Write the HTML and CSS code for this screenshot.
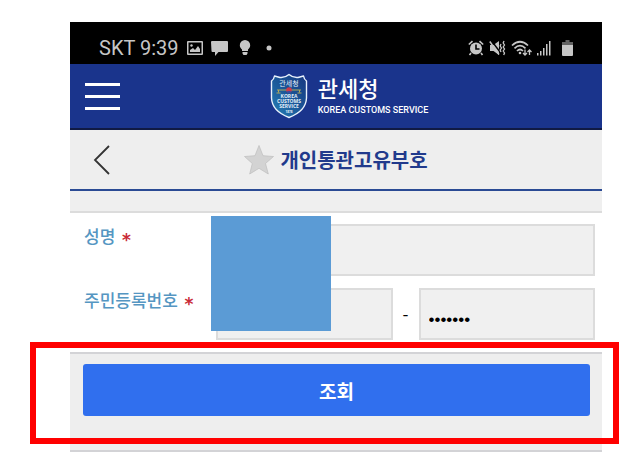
FILE: index.html
```
<!DOCTYPE html>
<html lang="ko">
<head>
    <meta charset="utf-8">
    <meta name="viewport" content="width=device-width, initial-scale=1">
    <title>개인통관고유부호</title>
    <link rel="stylesheet" href="styles.css">
</head>

<body>
    <div class="phone">
        <div class="status-bar">
            <span class="carrier">SKT 9:39</span>
            <svg class="status-icon" width="16" height="16" viewBox="0 0 16 16">
                <path fill="#c6c6c6" fill-rule="evenodd" d="M1 1h14q1 0 1 1v12q0 1-1 1H1q-1 0-1-1V2q0-1 1-1zM1.500 2.500v11h13v-11z"/>
                <path fill="#c6c6c6" d="M3 12V10l3-2 2 2 3-4 2 3v3z"/>
                <circle cx="4.500" cy="5.500" r="1.200" fill="#c6c6c6"/>
            </svg>
            <svg class="status-icon" width="17" height="16" viewBox="0 0 17 16">
                <path fill="#c6c6c6" d="M1 1h15q1 0 1 1v9q0 1-1 1H7.500L4 16v-4H1.500q-1 0-1-1L0 2q0-1 1-1z"/>
            </svg>
            <svg class="status-icon bulb" width="12" height="16" viewBox="0 0 12 16">
                <path fill="#c6c6c6" d="M6 0a5.200 5.200 0 0 1 5.200 5.200c0 2-1.200 3.300-2.200 4.300v1.500H3V9.500C2 8.500.8 7.200.8 5.200A5.200 5.200 0 0 1 6 0zM3.500 12h5v1.500L7.500 15h-3l-1-1.500z"/>
            </svg>
            <svg class="status-icon dot" width="6" height="6" viewBox="0 0 6 6">
                <circle cx="3" cy="3" r="2.500" fill="#c6c6c6"/>
            </svg>

            <div class="status-right">
                <svg width="16" height="16" viewBox="0 0 16 16">
                    <path fill="none" stroke="#c6c6c6" stroke-width="1.600" d="M.8 4.500 4.500 1.200M15.200 4.500 11.500 1.200M3 13l-1.500 2M13 13l1.500 2"/>
                    <circle cx="8" cy="8.500" r="6" fill="#c6c6c6"/>
                    <path fill="none" stroke="#000" stroke-width="1.600" d="M8 4.500V9h3.500"/>
                </svg>
                <svg width="17" height="16" viewBox="0 0 17 16">
                    <path fill="#c6c6c6" d="M1 5h3.500L10 1v14l-5.500-4H1z"/>
                    <path stroke="#000" stroke-width="1.400" d="M2 0l9 12"/>
                    <path stroke="#c6c6c6" stroke-width="1.500" d="M.8 1.500 10 14.500"/>
                    <path fill="none" stroke="#c6c6c6" stroke-width="1.300" d="m12 4-.8 2 1.300 2-1.300 2 .8 2M15 1l-.8 2 1.300 2-1.300 2 1.300 2-1.300 2 1.300 2-.8 2"/>
                </svg>
                <svg width="21" height="16" viewBox="0 0 21 16">
                    <path fill="none" stroke="#c6c6c6" stroke-width="1.700" d="M1 5.500Q9 -2 17 5.500M3.500 8.300Q9 3 14.500 8.300M6 11Q9 8 12 11"/>
                    <circle cx="9" cy="13" r="1.300" fill="#c6c6c6"/>
                    <path fill="none" stroke="#c6c6c6" stroke-width="1.300" d="M14 9.500V15m-2-2 2 2 2-2M18.500 15V10m-2 2 2-2 2 2"/>
                </svg>
                <svg width="14" height="16" viewBox="0 0 14 16">
                    <path fill="#c6c6c6" d="M0 13h1.500v2.500H0zM3 11h1.500v4.500H3zM6 8h1.500v7.500H6zM9 4h1.500v11.500H9zM12 1h1.500v14.500H12z"/>
                </svg>
                <svg class="battery" width="11" height="16" viewBox="0 0 11 16">
                    <path fill="#626262" d="M3.500 0h4v2H11v4H0V2h3.500z"/>
                    <path fill="#c6c6c6" d="M0 5h11v10q0 1-1 1H1q-1 0-1-1z"/>
                </svg>
            </div>
        </div>

        <header class="site-header">
            <button class="menu-button" type="button" aria-label="메뉴">
                <span></span>
                <span></span>
                <span></span>
            </button>
            <a class="logo" href="#">
                <svg width="38" height="46" viewBox="0 0 38 46">
                    <defs>
                        <linearGradient id="shield" x1="0" y1="1" x2="1" y2="0">
                            <stop offset="0" stop-color="#2682b8"/>
                            <stop offset=".5" stop-color="#1b5798"/>
                            <stop offset="1" stop-color="#173780"/>
                        </linearGradient>
                    </defs>
                    <path fill="url(#shield)" stroke="#e8f1fc" stroke-width="1.400" stroke-linejoin="round" d="M19 1.500Q23 5 28 4.500L33.500 3Q34 6 36.500 8V25Q36 38 19 44.500 2 38 1.500 25V8Q4 6 4.500 3L10 4.500Q15 5 19 1.500z"/>
                    <g class="shield-text">
                        <text class="shield-ko" x="19" y="13">관세청</text>
                        <text x="19" y="25">KOREA</text>
                        <text x="19" y="30">CUSTOMS</text>
                        <text x="19" y="35">SERVICE</text>
                        <text class="shield-year" x="19" y="40">1878</text>
                    </g>
                    <path fill="none" stroke="#b0a85c" d="M7 17h24M8.500 17v2.500M29.500 17v2.500M6.500 20h4M27.500 20h4"/>
                    <circle cx="19" cy="17" r="2.800" fill="#cd3b4b"/>
                    <path fill="#354ba5" d="M16.500 18.500Q19 17.500 21.500 18.500A2.800 2.800 0 0 1 16.500 18.500z"/>
                </svg>
                <span class="logo-text">
                    <span class="logo-ko">관세청</span>
                    <span class="logo-en">KOREA CUSTOMS SERVICE</span>
                </span>
            </a>
        </header>

        <div class="title-bar">
            <button class="back-button" type="button" aria-label="뒤로">
                <svg width="18" height="30" viewBox="0 0 18 30">
                    <path fill="none" stroke="#333" stroke-width="1.800" d="M16 1 2 15l14 14"/>
                </svg>
            </button>
            <h1 class="title">
                <svg width="30" height="30" viewBox="0 0 30 30">
                    <path fill="#d3d3d3" stroke="#bdbdbd" stroke-width=".7" d="M15 .5l4 10.200 10.500.8-8 7 2.800 10.500L15 23.300 5.700 29l2.600-10.500-7.800-7 10.500-.8z"/>
                </svg>
                개인통관고유부호
            </h1>
        </div>

        <div class="spacer"></div>

        <form>
            <div class="fields">
                <label for="userName">성명 <span class="required">*</span></label>
                <div class="field">
                    <input type="text" id="userName">
                </div>

                <label for="idFront">주민등록번호 <span class="required">*</span></label>
                <div class="field">
                    <input type="text" id="idFront">
                    <span class="dash">-</span>
                    <input type="password" id="idBack" value="0000000" aria-label="주민등록번호 뒷자리">
                </div>
                <div class="mask"></div>
            </div>

            <div class="actions">
                <button class="search-button" type="button">조회</button>
                <div class="highlight"></div>
            </div>
        </form>
    </div>
</body>
</html>
```
FILE: styles.css
```
* {
    box-sizing: border-box;
}
body {
    margin: 0;
    background-color: #fff;
    font-family: "Noto Sans CJK KR", sans-serif;
    font-size: 17px;
}
button {
    font-family: inherit;
    border: none;
    cursor: pointer;
}
svg {
    display: block;
    flex: none;
}
.phone {
    margin: 22px 35px 0 70px;
}

/* status bar */
.status-bar {
    display: flex;
    align-items: center;
    height: 42px;
    padding: 9px 29px 0 29px;
    background-color: #000;
    color: #c6c6c6;
}
.carrier {
    font-family: Roboto, sans-serif;
    font-size: 20px;
}
.status-icon {
    margin-left: 8px;
}
.bulb {
    margin-left: 11px;
}
.dot {
    margin-left: 15px;
}
.status-right {
    display: flex;
    gap: 5px;
    margin-left: auto;
}
.battery {
    margin-left: 6px;
}

/* header */
.site-header {
    display: grid;
    grid-template-columns: 62px 1fr 36px;
    align-items: center;
    height: 66px;
    background-color: #1a348c;
    border-bottom: 2px solid #101a44;
}
.menu-button {
    display: flex;
    flex-direction: column;
    gap: 9px;
    width: 35px;
    margin-left: 15px;
    padding: 0;
    background: none;
}
.menu-button span {
    height: 3px;
    background-color: #fff;
}
.logo {
    display: flex;
    justify-content: center;
    gap: 10px;
    color: #fff;
    text-decoration: none;
}
.logo-text {
    display: flex;
    flex-direction: column;
}
.logo-ko {
    font-size: 22px;
    font-weight: 500;
    line-height: 28px;
}
.logo-en {
    font-family: Roboto, sans-serif;
    font-size: 9px;
    font-weight: 500;
    line-height: 18px;
}
.shield-text {
    fill: #e4effa;
    font-family: "Open Sans", sans-serif;
    font-size: 5px;
    font-weight: 700;
    text-anchor: middle;
}
.shield-ko {
    font-family: "Noto Sans CJK KR", sans-serif;
    font-size: 7px;
    font-weight: 400;
}
.shield-year {
    font-size: 3px;
}

/* page title */
.title-bar {
    display: grid;
    grid-template-columns: 62px 1fr 62px;
    align-items: center;
    height: 61px;
    background-color: #eee;
    border-bottom: 2px solid #2a4a94;
}
.back-button {
    width: 18px;
    margin-left: 23px;
    padding: 0;
    background: none;
}
.title {
    display: flex;
    align-items: center;
    justify-content: center;
    gap: 6px;
    margin: 0;
    color: #213a8c;
    font-size: 20px;
    font-weight: 700;
    line-height: 30px;
}
.spacer {
    height: 22px;
    background-color: #efefef;
    border-bottom: 2px solid #dcdcdc;
}

/* form */
.fields {
    position: relative;
    display: grid;
    grid-template-columns: 132px minmax(0, 1fr);
    row-gap: 12px;
    padding: 11px 7px 12px 14px;
}
.fields label {
    color: #5596c2;
    font-weight: 500;
    line-height: 24px;
}
.required {
    margin-left: 2px;
    color: #c92a37;
    font-family: "DejaVu Sans", sans-serif;
    font-weight: 700;
    line-height: 1;
    vertical-align: -3px;
}
.field {
    display: flex;
    align-items: center;
}
.field input {
    flex: 1;
    min-width: 0;
    height: 52px;
    padding: 12px 8px 0;
    background-color: #f0f0f0;
    border: 2px solid #dcdcdc;
    border-radius: 0;
    font-family: "Liberation Sans", sans-serif;
    font-size: 17px;
}
.dash {
    width: 26px;
    text-align: center;
}
.mask {
    position: absolute;
    top: 3px;
    left: 141px;
    width: 120px;
    height: 115px;
    background-color: #5b9bd5;
}
.actions {
    position: relative;
    padding: 10px 12px 34px 13px;
    background-color: #eee;
    border-top: 2px solid #d3d3d6;
    border-bottom: 2px solid #d3d3d6;
}
.search-button {
    display: block;
    width: 100%;
    height: 52px;
    background-color: #306fee;
    border-radius: 3px;
    color: #fff;
    font-size: 19px;
    font-weight: 700;
}
.highlight {
    position: absolute;
    top: -12px;
    right: -17px;
    bottom: 6px;
    left: -40px;
    border: 6px solid #f00;
    pointer-events: none;
}
```
